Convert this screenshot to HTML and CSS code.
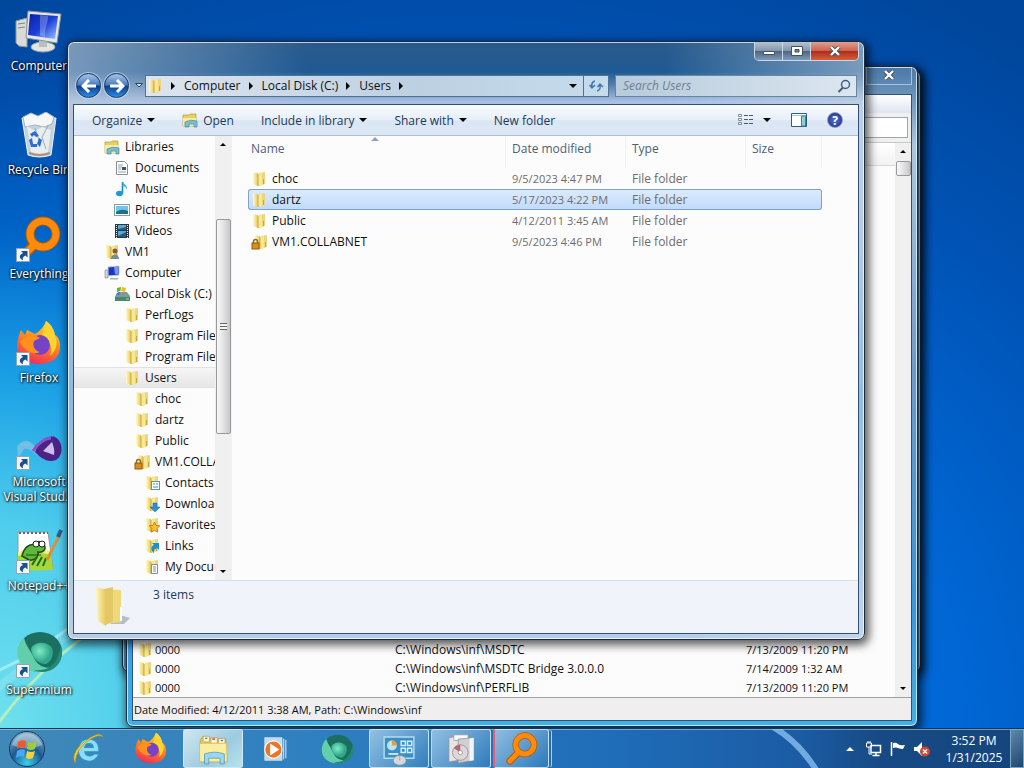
FILE: index.html
```html
<!DOCTYPE html>
<html lang="en">
<head>
  <meta charset="UTF-8">
  <title>Desktop</title>
  <link rel="stylesheet" href="styles.css">
</head>
<body>
  <!-- shared icons -->
  <svg class="defs" width="0" height="0" aria-hidden="true">
    <defs>
      <linearGradient id="gFolder" x1="0" x2="1"><stop offset="0" stop-color="#fffad0"/><stop offset="1" stop-color="#e6c858"/></linearGradient>
      <linearGradient id="gFox" x1="0.7" y1="0" x2="0.3" y2="1"><stop offset="0" stop-color="#ffe03a"/><stop offset="0.45" stop-color="#ff8a1c"/><stop offset="1" stop-color="#f02a5c"/></linearGradient>
      <linearGradient id="gScreen" x1="0" x2="1" y2="1"><stop offset="0" stop-color="#0a1ea8"/><stop offset="0.5" stop-color="#1c3fd8"/><stop offset="1" stop-color="#9cc4ff"/></linearGradient>
      <radialGradient id="gMarble" cx="0.4" cy="0.4"><stop offset="0" stop-color="#7eecc8"/><stop offset="1" stop-color="#2fa888"/></radialGradient>
      <radialGradient id="gOrb" cx="0.5" cy="0.9" r="0.9"><stop offset="0" stop-color="#3ad0f0"/><stop offset="0.5" stop-color="#1a5a92"/><stop offset="1" stop-color="#8fb4cc"/></radialGradient>
    </defs>
    <symbol id="folder" viewBox="0 0 16 16">
      <path d="M8 2l6-1v12l-6 2z" fill="#ecd67c"/>
      <path d="M2 1l5 1v13l-5-2z" fill="url(#gFolder)"/>
      <path d="M7 3l4-1v12l-4 1z" fill="#f8e894"/>
      <path d="M7 3v12M12.500 8v5" stroke="#c9a840" fill="none"/>
    </symbol>
    <symbol id="folder-lock" viewBox="0 0 16 16">
      <use href="#folder" x="2"/>
      <rect x="1" y="9" width="7" height="6" fill="#d98e1c" stroke="#8d5a10"/>
      <path d="M2.500 9V7.500a2 2 0 0 1 4 0V9" fill="none" stroke="#8d6a20" stroke-width="1.500"/>
    </symbol>
    <symbol id="folder-card" viewBox="0 0 16 16">
      <use href="#folder"/>
      <rect x="7.500" y="6.500" width="8" height="8" fill="#fff" stroke="#5b96b8"/>
      <path d="M9 9h2M12 9h2M9 12h5" stroke="#3a8fc8"/>
    </symbol>
    <symbol id="folder-down" viewBox="0 0 16 16">
      <use href="#folder"/>
      <path d="M9 7h4v4h3l-5 5-5-5h3z" fill="#2f8fd0" stroke="#1769a5" stroke-width="0.500"/>
    </symbol>
    <symbol id="folder-star" viewBox="0 0 16 16">
      <use href="#folder"/>
      <path d="M10.500 5l1.600 3.400 3.700.4-2.700 2.600.7 3.700-3.300-1.800-3.300 1.800.7-3.700L5.200 8.800l3.700-.4z" fill="#fbc02c" stroke="#d97a12"/>
    </symbol>
    <symbol id="folder-link" viewBox="0 0 16 16">
      <use href="#folder"/>
      <path d="M8 5h7v7l-2-2c-3 1-3 3-3 5-4-3-3-7 0-8z" fill="#1e8fd0"/>
    </symbol>
    <symbol id="folder-doc" viewBox="0 0 16 16">
      <use href="#folder"/>
      <path d="M7.500 5.500h6v9h-6z" fill="#fff" stroke="#7a8fb0"/>
      <path d="M9 8h3M9 10h3M9 12h3" stroke="#6f8fc0"/>
    </symbol>
    <symbol id="folder-user" viewBox="0 0 16 16">
      <use href="#folder"/>
      <circle cx="11" cy="7" r="2.500" fill="#8a5a38"/>
      <path d="M7 15c0-6 8-6 8 0z" fill="#6f8f88"/>
    </symbol>
    <symbol id="library" viewBox="0 0 16 16">
      <path d="M1 3h6l1-1h6v12H1z" fill="#e8cf68" stroke="#b89a38" stroke-width="0.700"/>
      <path d="M1 6h13v8H1z" fill="#f8eca0"/>
      <path d="M3 15v-5q5-3 12-1v6h-3v-3H7v3z" fill="#79bfd0" stroke="#4a8aa0" stroke-width="0.700"/>
    </symbol>
    <symbol id="doc" viewBox="0 0 16 16">
      <path d="M2.500 1.500h8l3 3v10h-11z" fill="#fff" stroke="#8a8f94"/>
      <path d="M4 5h5M4 7h4M4 9h3M4 12h8" stroke="#8aa0b0"/>
      <path d="M8 7h4v3H8z" fill="#3f5468"/>
    </symbol>
    <symbol id="music" viewBox="0 0 16 16">
      <path d="M8.500 1v11" stroke="#1a86c0" stroke-width="1.600"/>
      <path d="M8.500 0c1 4 6 4 4 9 0-3-2-4-4-4z" fill="#38b0e0"/>
      <ellipse cx="5.500" cy="12.500" rx="3.500" ry="2.700" fill="#1f98d4"/>
    </symbol>
    <symbol id="picture" viewBox="0 0 16 16">
      <rect x="0.500" y="2.500" width="15" height="11" fill="#fff" stroke="#8c9aa4"/>
      <path d="M2 4h12v8H2z" fill="#6fc8ec"/>
      <path d="M2 10q5-4 12-1v3H2z" fill="#1f6f88"/>
    </symbol>
    <symbol id="video" viewBox="0 0 16 16">
      <path d="M1 1h14v14H1z" fill="#2a3640"/>
      <path d="M4 2h8v5H4zM4 8h8v6H4z" fill="#5aa8d8"/>
      <path d="M4 6l8-2v3H4zM4 13l8-4v5H4z" fill="#28587c"/>
      <path d="M2.500 2v13M13.500 2v13" stroke="#e6eef2" stroke-dasharray="1 1"/>
    </symbol>
    <symbol id="pc" viewBox="0 0 16 16">
      <path d="M1 5h3v8H1z" fill="#cfd4da" stroke="#7c8590" stroke-width="0.600"/>
      <path d="M4 2l11-1v9L4 11z" fill="#1f35c0" stroke="#c2cad6"/>
      <path d="M10 2l4-.5V9l-3 .5z" fill="#6f9af0"/>
      <path d="M6 13h8v1.500H6z" fill="#a8b0ba"/>
    </symbol>
    <symbol id="disk" viewBox="0 0 16 16">
      <path d="M2 9l2-3h9l3 4v5H1v-5z" fill="#7f9a9a"/>
      <path d="M1 11h15v4H1z" fill="#4e8474"/>
      <path d="M12 13h3" stroke="#6cf07c"/>
      <path d="M3 2l4-1-.5 4L3 6z" fill="#6fb02c"/><path d="M8 1l4 1-1 4-4-1z" fill="#f2b81e"/>
      <path d="M3 7l3-1-.5 3H2z" fill="#3a80d8"/>
    </symbol>
    <symbol id="shortcut" viewBox="0 0 14 14">
      <path d="M.5.5h13v13H.5z" fill="#f4f8fb" stroke="#8fa6b8"/>
      <path d="M5 3h6.500v6.500L9.500 7.500C7 8.500 6.500 10 7 12 3 11 2.500 7 7 5z" fill="#1c4f8c"/>
    </symbol>
    <symbol id="everything" viewBox="0 0 48 48">
      <path d="M19 29L7 41" stroke="#b25a00" stroke-width="10" stroke-linecap="round"/>
      <circle cx="28" cy="18" r="13" fill="none" stroke="#b25a00" stroke-width="9"/>
      <path d="M19 29L7 41" stroke="#ff8a0c" stroke-width="7" stroke-linecap="round"/>
      <circle cx="28" cy="18" r="13" fill="none" stroke="#ff8a0c" stroke-width="7"/>
    </symbol>
    <symbol id="firefox" viewBox="0 0 48 48">
      <path d="M31 1c6 4 8 9 9 14 3 1 6 7 5 14-1 10-10 15-21 15S2 37 2 26c0-6 2-11 4-16l4 5 2-5c3 1 5 3 8 4 4-2 9-7 11-13z" fill="url(#gFox)"/>
      <path d="M31 1c6 5 8 9 9 15 4 8 0 16-5 20 4-10-2-16-8-20 1-5 3-9 4-15z" fill="#ffd42e"/>
      <circle cx="25" cy="25" r="10" fill="#7542c8"/>
      <path d="M5 22c6-7 15-8 20-4l-6 3c-2 5 1 10 6 11-6 3-14 1-20-10z" fill="#ff911c"/>
    </symbol>
    <symbol id="supermium" viewBox="0 0 48 48">
      <ellipse cx="25" cy="20" rx="22" ry="20" fill="#1c6f60"/>
      <path d="M9 6C-2 16 0 38 22 40c7 0 11-1 15-4-9 0-15-3-18-10S11 14 9 6z" fill="#62cfaa"/>
      <path d="M46 14c4 14-5 26-19 26-4 0-6-1-8-2 15 2 24-7 27-24z" fill="#218a72"/>
      <path d="M16 17c2-7 16-9 21-1 2 6 0 13-6 16-8 0-14-6-15-15z" fill="url(#gMarble)"/>
    </symbol>
    <symbol id="computer" viewBox="0 0 48 48">
      <path d="M1 13l11-3v29l-8-1-3-3z" fill="#d9dcd6" stroke="#949a98"/>
      <path d="M3 16l7-1M3 20l7-1" stroke="#7c8484"/>
      <ellipse cx="28" cy="39" rx="12" ry="5" fill="#e3e5e0" stroke="#9aa0a0"/>
      <path d="M24 31h8v8h-8z" fill="#b9bec0"/>
      <path d="M13 3l33 3-4 29-31-5z" fill="#e6e8e6" stroke="#8c9294"/>
      <path d="M15 6l28 2-3 23-27-4z" fill="url(#gScreen)"/>
      <path d="M25 7l8 1c0 9-4 12-3 21l-5-1z" fill="#fff" opacity=".25"/>
    </symbol>
    <symbol id="bin" viewBox="0 0 48 48">
      <path d="M7 6h34l-5 37q-12 4-23 0z" fill="#c4d2dc" stroke="#eef4f8"/>
      <path d="M8 5l8-4 7 3 8-4 8 5-2 7-8 3-9-2-10 2z" fill="#f4f6f7" stroke="#a9b4bc"/>
      <path d="M12 14l8 5 7-4 9 3-3 22-9 2-8-2z" fill="#e8edf0"/>
      <path d="M20 16l4 12M33 14l-6 11 4 12" stroke="#9babb6" fill="none"/>
      <path d="M15 22l5-3 4 5-3 1-2-2-2 2zM14 28l3-2 1 6h4v3h-6zM24 26l3 2-2 7-3-3z" fill="#2f6ad0"/>
      <path d="M14 41q11 4 21 0" stroke="#b98a78" stroke-width="2" fill="none"/>
    </symbol>
    <symbol id="vs" viewBox="0 0 48 48">
      <path d="M2 22c8-8 13-6 19 2l8 9c-9 0-13-10-20-8l-6 9z" fill="#7fc0e4" opacity=".85"/>
      <path d="M20 28C25 15 33 11 40 13c8 4 9 18 1 23-9 3-15-2-21-8z" fill="#4c2286"/>
      <path d="M28 27l9-9q3 7 2 13z" fill="#cdbcec"/>
      <path d="M18 27q8-12 18-13" stroke="#8b55c8" stroke-width="3" fill="none"/>
    </symbol>
    <symbol id="notepad" viewBox="0 0 48 48">
      <path d="M3 4h30l5 37-35 1z" fill="#fff" stroke="#8f9a9a"/>
      <path d="M3 28q16-8 33-4l2 18-35 1z" fill="#a5d838"/>
      <path d="M3 24q17-6 33-1v4q-16-5-33 1z" fill="#f4ee7a"/>
      <path d="M4 5h29" stroke="#666" stroke-width="2" stroke-dasharray="2 2"/>
      <path d="M7 28c2-9 8-13 14-11 1-5 7-4 8 0 3 4-1 8-6 7 1 5-4 9-9 8z" fill="#5eb83a" stroke="#184c18" stroke-width="1.500"/>
      <circle cx="21" cy="16" r="3" fill="#fff" stroke="#222"/><circle cx="27" cy="16" r="3" fill="#fff" stroke="#222"/>
      <path d="M11 27h15" stroke="#184c18"/>
      <path d="M17 37l5-8M22 38l5-9M28 38l3-8" stroke="#1d6c22" stroke-width="2"/>
      <path d="M32 32L45 6" stroke="#d7913c" stroke-width="3"/><path d="M43 9l3-7" stroke="#345a90" stroke-width="4"/>
    </symbol>
    <symbol id="ie" viewBox="0 0 48 48">
      <path d="M38 28H18c1 6 9 8 13 3h7c-3 8-10 11-16 10-9-1-14-8-13-17C10 14 17 9 25 10c10 1 14 9 13 18zM18 22h12c0-7-11-8-12 0z" fill="#8cdcf8" stroke="#2d92c8" stroke-width="1.500"/>
      <path d="M5 44C-2 35 8 20 20 12 30 4 42 0 43 7c-3-4-11-1-20 5C11 21 4 33 5 44z" fill="#f8d32c" stroke="#b99518"/>
    </symbol>
    <symbol id="explorer" viewBox="0 0 48 48">
      <path d="M6 12l3-5h9l2 3h22l2 32H6z" fill="#e8c95e" stroke="#b79638"/>
      <path d="M10 6h9v8h-9zM21 8h9v8h-9zM32 9h9v8h-9z" fill="#fff6d8" stroke="#b79a50"/>
      <path d="M13 8h3v2h-3z" fill="#3fa04c"/><path d="M23 9h4v2h-4z" fill="#c84040"/><path d="M35 11h3v2h-3z" fill="#4070c0"/>
      <path d="M5 16h38l1 26H5z" fill="#f9eda0" stroke="#d3b95a"/>
      <path d="M12 45V31q14-5 28 0v14h-6v-8H18v8z" fill="#9cd6ee" stroke="#4790b8"/>
    </symbol>
    <symbol id="wmp" viewBox="0 0 48 48">
      <path d="M5 3h32v42H5z" fill="#c3d9e6" stroke="#e9f4fa"/>
      <path d="M40 5v38M44 7v34" stroke="#d0e2ee" stroke-width="2"/>
      <circle cx="21" cy="25" r="16" fill="#ed7424" stroke="#fff" stroke-width="2"/>
      <path d="M15 14l17 11-17 11z" fill="#fff"/>
    </symbol>
    <symbol id="cpanel" viewBox="0 0 48 48">
      <path d="M3 7h42v30H3z" fill="#3a8fc4" stroke="#b7dcf0" stroke-width="2"/>
      <circle cx="14" cy="19" r="7" fill="#b8e4f6"/><path d="M14 19v-7a7 7 0 0 1 7 7z" fill="#f29c2c"/>
      <path d="M27 13h6v6h-6zM36 13h6v6h-6zM27 23h6v6h-6zM36 23h6v6h-6z" fill="none" stroke="#d5effa" stroke-width="2"/>
      <path d="M9 31h14" stroke="#fff" stroke-width="2"/>
      <ellipse cx="25" cy="40" rx="9" ry="7" fill="#d4d8da" stroke="#838d94"/><path d="M25 34v6" stroke="#8d969c"/>
    </symbol>
    <symbol id="installer" viewBox="0 0 48 48">
      <path d="M7 8l20-3v34L7 42z" fill="#e8e4e4" stroke="#9a9494"/>
      <path d="M14 4h20v8H14z" fill="#fafafa" stroke="#999"/>
      <path d="M20 10l22-2v32l-22 4z" fill="#cfcfd4" stroke="#8c8c92"/>
      <path d="M36 9l6-1v32l-6 1z" fill="#f4f4f4"/>
      <circle cx="23" cy="29" r="11" fill="#ded6da" stroke="#8e8488"/><path d="M23 29l-9-6a11 11 0 0 1 9-5z" fill="#b06878"/>
      <circle cx="23" cy="29" r="3" fill="#fff" stroke="#888"/>
    </symbol>
    <symbol id="x" viewBox="0 0 12 10">
      <path d="M2 1l8 8M10 1L2 9" stroke="#45505c" stroke-width="4"/>
      <path d="M2 1l8 8M10 1L2 9" stroke="#fff" stroke-width="2.400"/>
    </symbol>
    <symbol id="up" viewBox="0 0 8 4"><path d="M0 4l4-4 4 4z"/></symbol>
    <symbol id="down" viewBox="0 0 8 4"><path d="M0 0h8L4 4z"/></symbol>
    <symbol id="right" viewBox="0 0 4 8"><path d="M0 0l4 4-4 4z"/></symbol>
  </svg>

  <main class="desktop">
    <svg class="wallpaper" viewBox="0 0 1024 728" preserveAspectRatio="none" aria-hidden="true">
      <path d="M-5 672Q70 640 140 560" stroke="#e8ffff" stroke-width="3" opacity=".45" fill="none"/>
      <path d="M-5 728Q50 650 140 600" stroke="#d8f8a0" stroke-width="3" opacity=".65" fill="none"/>
      <path d="M-5 690Q70 630 140 590" stroke="#fff" stroke-width="8" opacity=".15" fill="none"/>
    </svg>

    <nav class="shortcuts">
      <a href="#"><svg class="pic"><use href="#computer"/></svg><span>Computer</span></a>
      <a href="#"><svg class="pic"><use href="#bin"/></svg><span>Recycle Bin</span></a>
      <a href="#"><svg class="pic"><use href="#everything"/></svg><svg class="arrow"><use href="#shortcut"/></svg><span>Everything</span></a>
      <a href="#"><svg class="pic"><use href="#firefox"/></svg><svg class="arrow"><use href="#shortcut"/></svg><span>Firefox</span></a>
      <a href="#"><svg class="pic"><use href="#vs"/></svg><svg class="arrow"><use href="#shortcut"/></svg><span>Microsoft<br>Visual Stud...</span></a>
      <a href="#"><svg class="pic"><use href="#notepad"/></svg><svg class="arrow"><use href="#shortcut"/></svg><span>Notepad++</span></a>
      <a href="#"><svg class="pic"><use href="#supermium"/></svg><svg class="arrow"><use href="#shortcut"/></svg><span>Supermium</span></a>
    </nav>

    <div class="window back-window"></div>

    <section class="window search-window">
      <div class="search-title">
        <button class="flat-close" aria-label="Close"><svg width="12" height="10"><use href="#x"/></svg></button>
      </div>
      <div class="client">
        <div class="menu-strip"></div>
        <div class="search-strip"><input type="text" aria-label="Search"></div>
        <div class="results">
          <div class="result-list">
            <div class="result-head"></div>
            <table>
              <tr><td><svg class="ico"><use href="#folder"/></svg>0000</td><td class="path">C:\Windows\inf\MSDTC</td><td>7/13/2009 11:20 PM</td></tr>
              <tr><td><svg class="ico"><use href="#folder"/></svg>0000</td><td class="path">C:\Windows\inf\MSDTC Bridge 3.0.0.0</td><td>7/14/2009 1:32 AM</td></tr>
              <tr><td><svg class="ico"><use href="#folder"/></svg>0000</td><td class="path">C:\Windows\inf\PERFLIB</td><td>7/13/2009 11:20 PM</td></tr>
            </table>
          </div>
          <div class="scrollbar">
            <svg width="6" height="3" viewBox="0 0 8 4"><use href="#up"/></svg>
            <div class="thumb small"></div>
            <svg class="end" width="6" height="3" viewBox="0 0 8 4"><use href="#down"/></svg>
          </div>
        </div>
        <div class="status">Date Modified: 4/12/2011 3:38 AM, Path: C:\Windows\inf</div>
      </div>
    </section>

    <section class="window explorer">
      <div class="titlebar">
        <div class="caption">
          <button class="min" aria-label="Minimize"><svg width="14" height="12"><path d="M1.500 6.500h11v3h-11z" fill="#fff" stroke="#45505c"/></svg></button>
          <button class="max" aria-label="Maximize"><svg width="14" height="12"><path d="M1.500 1.500h11v9h-11z" fill="#fff" stroke="#45505c"/><path d="M5 4.500h4v2.500H5z" fill="#6f86a0" stroke="#45505c"/></svg></button>
          <button class="close" aria-label="Close"><svg width="12" height="10"><use href="#x"/></svg></button>
        </div>
      </div>
      <div class="navbar">
        <button class="round" aria-label="Back"><svg width="16" height="14"><path d="M8 1L2 7l6 6M2 7h13" fill="none" stroke="#fff" stroke-width="3"/></svg></button>
        <button class="round" aria-label="Forward"><svg width="16" height="14"><path d="M8 1l6 6-6 6M14 7H1" fill="none" stroke="#fff" stroke-width="3"/></svg></button>
        <button class="recent" aria-label="Recent pages"><svg width="8" height="5"><path d="M.5.500h7L4 4z" fill="#cfe4f4" stroke="#24486c"/></svg></button>
        <div class="address">
          <svg class="ico"><use href="#folder"/></svg>
          <svg class="sep" width="4" height="8"><use href="#right"/></svg>
          <a href="#">Computer</a><svg class="sep" width="4" height="8"><use href="#right"/></svg>
          <a href="#">Local Disk (C:)</a><svg class="sep" width="4" height="8"><use href="#right"/></svg>
          <a href="#">Users</a><svg class="sep" width="4" height="8"><use href="#right"/></svg>
          <button class="drop" aria-label="Previous locations"><svg width="8" height="4"><use href="#down"/></svg></button>
          <button class="refresh" aria-label="Refresh"><svg width="16" height="14"><path d="M7 2Q3 3 4 8M1.500 6L4 9l3-3M9 12q4-1 3-6M9.500 8L12 5l3 3" fill="none" stroke="#3f78b0" stroke-width="1.500"/></svg></button>
        </div>
        <div class="searchbox">
          <input type="text" placeholder="Search Users" aria-label="Search Users">
          <svg width="14" height="14"><circle cx="8.500" cy="5.500" r="4" fill="none" stroke="#3f5f80" stroke-width="1.500"/><path d="M6 8.500L1.500 13" stroke="#3f5f80" stroke-width="2"/></svg>
        </div>
      </div>
      <div class="client">
        <div class="toolbar">
          <button>Organize <svg width="8" height="4"><use href="#down"/></svg></button>
          <button class="open"><svg class="ico"><use href="#library"/></svg> Open</button>
          <button>Include in library <svg width="8" height="4"><use href="#down"/></svg></button>
          <button>Share with <svg width="8" height="4"><use href="#down"/></svg></button>
          <button>New folder</button>
          <div class="toolbar-right">
            <button class="views" aria-label="Change your view">
              <svg width="16" height="14"><path d="M1.500 1.500h3v2h-3zM1.500 5.500h3v2h-3zM1.500 9.500h3v2h-3z" fill="#fff" stroke="#7c8c9c"/><path d="M7 2.500h9M7 6.500h9M7 10.500h9" stroke="#4a5a6c" stroke-dasharray="4 1"/></svg>
              <svg width="8" height="4"><use href="#down"/></svg>
            </button>
            <button aria-label="Preview pane"><svg width="16" height="14"><path d="M.5.500h15v13H.5z" fill="#fff" stroke="#2f5a80"/><path d="M1 2.500h14" stroke="#a8c4dc"/><path d="M10.500 3h4v10h-4z" fill="#8fd0d8" stroke="#3f7f98"/></svg></button>
            <button class="help" aria-label="Help">?</button>
          </div>
        </div>
        <div class="body">
          <nav class="tree">
            <ul>
              <li class="l0"><a href="#"><svg class="ico"><use href="#library"/></svg>Libraries</a></li>
              <li class="l1"><a href="#"><svg class="ico"><use href="#doc"/></svg>Documents</a></li>
              <li class="l1"><a href="#"><svg class="ico"><use href="#music"/></svg>Music</a></li>
              <li class="l1"><a href="#"><svg class="ico"><use href="#picture"/></svg>Pictures</a></li>
              <li class="l1"><a href="#"><svg class="ico"><use href="#video"/></svg>Videos</a></li>
              <li class="l0"><a href="#"><svg class="ico"><use href="#folder-user"/></svg>VM1</a></li>
              <li class="l0"><a href="#"><svg class="ico"><use href="#pc"/></svg>Computer</a></li>
              <li class="l1"><a href="#"><svg class="ico"><use href="#disk"/></svg>Local Disk (C:)</a></li>
              <li class="l2"><a href="#"><svg class="ico"><use href="#folder"/></svg>PerfLogs</a></li>
              <li class="l2"><a href="#"><svg class="ico"><use href="#folder"/></svg>Program Files</a></li>
              <li class="l2"><a href="#"><svg class="ico"><use href="#folder"/></svg>Program Files</a></li>
              <li class="l2 current"><a href="#"><svg class="ico"><use href="#folder"/></svg>Users</a></li>
              <li class="l3"><a href="#"><svg class="ico"><use href="#folder"/></svg>choc</a></li>
              <li class="l3"><a href="#"><svg class="ico"><use href="#folder"/></svg>dartz</a></li>
              <li class="l3"><a href="#"><svg class="ico"><use href="#folder"/></svg>Public</a></li>
              <li class="l3"><a href="#"><svg class="ico"><use href="#folder-lock"/></svg>VM1.COLLABNET</a></li>
              <li class="l4"><a href="#"><svg class="ico"><use href="#folder-card"/></svg>Contacts</a></li>
              <li class="l4"><a href="#"><svg class="ico"><use href="#folder-down"/></svg>Downloads</a></li>
              <li class="l4"><a href="#"><svg class="ico"><use href="#folder-star"/></svg>Favorites</a></li>
              <li class="l4"><a href="#"><svg class="ico"><use href="#folder-link"/></svg>Links</a></li>
              <li class="l4"><a href="#"><svg class="ico"><use href="#folder-doc"/></svg>My Documents</a></li>
            </ul>
          </nav>
          <div class="scrollbar">
            <svg width="6" height="3" viewBox="0 0 8 4"><use href="#up"/></svg>
            <div class="thumb tall"></div>
            <svg class="end" width="6" height="3" viewBox="0 0 8 4"><use href="#down"/></svg>
          </div>
          <div class="files">
            <table>
              <thead>
                <tr><th class="name">Name<svg class="sorted" width="8" height="4"><use href="#up"/></svg></th><th class="date">Date modified</th><th class="type">Type</th><th class="size">Size</th></tr>
              </thead>
              <tbody>
                <tr><td><svg class="ico"><use href="#folder"/></svg>choc</td><td class="when">9/5/2023 4:47 PM</td><td>File folder</td><td></td></tr>
                <tr class="selected"><td><svg class="ico"><use href="#folder"/></svg>dartz</td><td class="when">5/17/2023 4:22 PM</td><td>File folder</td><td></td></tr>
                <tr><td><svg class="ico"><use href="#folder"/></svg>Public</td><td class="when">4/12/2011 3:45 AM</td><td>File folder</td><td></td></tr>
                <tr><td><svg class="ico"><use href="#folder-lock"/></svg>VM1.COLLABNET</td><td class="when">9/5/2023 4:46 PM</td><td>File folder</td><td></td></tr>
              </tbody>
            </table>
          </div>
        </div>
        <div class="details">
          <svg width="44" height="46" viewBox="0 0 44 46"><path d="M30 32l10 3-6 6H20z" fill="#8f98a0" opacity=".6"/><path d="M14 6l17 1v32l-17 2z" fill="#f0d878"/><path d="M14 6l9-2v34l-7 4z" fill="#e4c868"/><path d="M5 3l11 4v36L8 38z" fill="url(#gFolder)"/><path d="M31 24v14" stroke="#fff" stroke-width="2"/></svg>
          <span>3 items</span>
        </div>
      </div>
    </section>
  </main>

  <footer class="taskbar">
    <svg class="streak" viewBox="0 0 80 40" preserveAspectRatio="none" aria-hidden="true"><path d="M-2 -6Q30 10 50 44" stroke="#8fc6f4" stroke-width="6" opacity=".75" fill="none"/></svg>
    <button class="start" aria-label="Start">
      <svg width="38" height="38" viewBox="0 0 38 38"><circle cx="19" cy="19" r="17.500" fill="url(#gOrb)" stroke="#15385a"/><path d="M4 15a15.500 15.500 0 0 1 30 0q-15 7-30 0z" fill="#fff" opacity=".35"/><path d="M10 12q4-3 8-1l-1 7q-4-2-8 1z" fill="#f0582c"/><path d="M20 12q4 2 9-1l-2 8q-4 2-8 0z" fill="#9ccc3c"/><path d="M9 21q4-3 8-1l-1 7q-4-2-8 1z" fill="#4aa8f0"/><path d="M19 21q4 2 8 0l-2 7q-4 2-7 0z" fill="#fcd033"/></svg>
    </button>
    <nav class="tasks">
      <button aria-label="Internet Explorer"><svg class="tico"><use href="#ie"/></svg></button>
      <button aria-label="Firefox"><svg class="tico"><use href="#firefox"/></svg></button>
      <button class="open active" aria-label="Windows Explorer"><svg class="tico"><use href="#explorer"/></svg></button>
      <button aria-label="Media Player"><svg class="tico media"><use href="#wmp"/></svg></button>
      <button aria-label="Supermium"><svg class="tico" viewBox="0 -4 48 48"><use href="#supermium" width="48" height="48"/></svg></button>
      <button class="open" aria-label="Control Panel"><svg class="tico"><use href="#cpanel"/></svg></button>
      <button class="open" aria-label="Programs and Features"><svg class="tico"><use href="#installer"/></svg></button>
      <button class="open stacked" aria-label="Everything"><svg class="tico"><use href="#everything"/></svg></button>
    </nav>
    <div class="tray">
      <svg class="more" width="8" height="4"><use href="#up"/></svg>
      <svg width="16" height="16"><path d="M5 4.500h9.500v7H5zM10 12v2M6.500 14.500h7" fill="none" stroke="#fff" stroke-width="1.500"/><path d="M.5 2h5v4h-5zM3 6v7h3" fill="none" stroke="#fff"/><path d="M2 0v2M4 0v2" stroke="#fff"/></svg>
      <svg width="16" height="16"><path d="M1.500 1v14" stroke="#fff" stroke-width="1.500"/><path d="M3 2q3-1 5 1t7 1l-2 4q-3 0-5-1t-5 0z" fill="#fff"/></svg>
      <svg width="16" height="16"><path d="M0 6h3l5-5v14l-5-5H0z" fill="#fff"/><circle cx="11" cy="10.500" r="5" fill="#d8432c"/><path d="M9 8.500l4 4M13 8.500l-4 4" stroke="#fff" stroke-width="1.500"/></svg>
      <div class="clock">3:52 PM<br>1/31/2025</div>
      <button class="peek" aria-label="Show desktop"></button>
    </div>
  </footer>
</body>
</html>
```

FILE: styles.css
```css
* {
  box-sizing: border-box;
}
body {
  margin: 0;
  height: 100vh;
  display: flex;
  flex-direction: column;
  overflow: hidden;
  font-family: "Open Sans", "Noto Sans", sans-serif;
  font-size: 12px;
  line-height: 15px;
  color: #111;
}
button {
  font: inherit;
  color: inherit;
  background: none;
  border: 0;
  padding: 0;
}
a {
  color: inherit;
  text-decoration: none;
}
svg {
  flex: none;
}
.defs {
  position: absolute;
}
.ico {
  width: 16px;
  height: 16px;
}

/* desktop */
.desktop {
  position: relative;
  flex: 1;
  min-height: 0;
  overflow: hidden;
  background:
    radial-gradient(ellipse 44% 88% at 0% 100%, #6fe0ee 0%, #4fcdec 32%, rgba(30, 170, 234, 0.85) 55%, rgba(0, 120, 220, 0.4) 78%, rgba(0, 100, 205, 0) 100%),
    radial-gradient(ellipse 95% 115% at 45% 100%, #0c84ea 0%, #0068d6 50%, #0052b4 78%, #00469c 100%);
}
.wallpaper {
  position: absolute;
  inset: 0;
  width: 100%;
  height: 100%;
}
.shortcuts {
  position: relative;
  display: grid;
  grid-auto-rows: 104px;
  width: 78px;
  padding-top: 8px;
}
.shortcuts a {
  position: relative;
  display: flex;
  flex-direction: column;
  align-items: center;
  gap: 2px;
  text-align: center;
  white-space: nowrap;
  color: #fff;
  text-shadow: 1px 1px 2px #000, 0 0 3px #000;
}
.pic {
  width: 48px;
  height: 48px;
}
.arrow {
  position: absolute;
  left: 16px;
  top: 32px;
  width: 14px;
  height: 14px;
}

/* windows */
.window {
  position: absolute;
  border: 1px solid #1b2a3c;
  border-radius: 7px;
  box-shadow: inset 0 0 0 1px rgba(255, 255, 255, 0.7), 2px 3px 10px 2px rgba(0, 0, 0, 0.65);
}
.back-window {
  top: 70px;
  right: 103px;
  bottom: 56px;
  left: 122px;
  background: #4a94cc;
}
.search-window {
  top: 66px;
  right: 106px;
  bottom: 1px;
  left: 126px;
  padding: 0 5px 5px;
  display: flex;
  flex-direction: column;
  background: linear-gradient(#4a78a8 0, #6f98bc 5%, #a9c8e0 12%, #6f9cc8 45%, #3a94dc 80%, #3fb0e8);
}
.search-title {
  height: 27px;
  display: flex;
  justify-content: flex-end;
  align-items: flex-start;
}
.flat-close {
  width: 46px;
  height: 18px;
  border: 1px solid rgba(220, 236, 250, 0.6);
  border-top: 0;
}
.client {
  flex: 1;
  min-height: 0;
  display: flex;
  flex-direction: column;
  border: 1px solid #2f5276;
  background: #fcfcfc;
}
.menu-strip {
  height: 18px;
  background: linear-gradient(#fff, #dfe4f0);
}
.search-strip {
  padding: 4px 3px;
  background: #f0f0f0;
  border-bottom: 1px solid #c8c8c8;
}
.search-strip input {
  display: block;
  width: 100%;
  height: 21px;
  border: 1px solid #9aa6b4;
  background: #fff;
}
.results {
  flex: 1;
  min-height: 0;
  display: flex;
}
.result-list {
  flex: 1;
  display: flex;
  flex-direction: column;
  justify-content: space-between;
}
.result-head {
  height: 23px;
  background: linear-gradient(#fff, #f2f2f2);
  border-bottom: 1px solid #d8d8d8;
}
.result-list table {
  width: 100%;
  table-layout: fixed;
  border-spacing: 0;
}
.result-list td {
  height: 19px;
  padding: 0 0 0 4px;
  font-size: 11px;
  white-space: nowrap;
}
.result-list .path {
  font-size: 12px;
}
.result-list td:nth-child(1) {
  width: 258px;
}
.result-list td:nth-child(3) {
  width: 153px;
}
.result-list .ico {
  vertical-align: -4px;
  margin-right: 2px;
}
.status {
  height: 23px;
  padding: 4px 1px;
  border-top: 1px solid #a0a0a0;
  background: #f0eeee;
  font-size: 11px;
}
.scrollbar {
  width: 16px;
  display: flex;
  flex-direction: column;
  align-items: center;
  padding: 7px 0;
  background: #f0f0f0;
}
.scrollbar .end {
  margin-top: auto;
}
.thumb {
  border: 1px solid #989898;
  border-radius: 2px;
  background: linear-gradient(90deg, #f8f8f8, #e2e2e4 50%, #c6c6ca);
}
.thumb.small {
  width: 15px;
  height: 15px;
  margin-top: 8px;
}
.thumb.tall {
  width: 15px;
  height: 50%;
  margin-top: 73px;
  display: grid;
  place-items: center;
}
.thumb.tall::after {
  content: "";
  width: 7px;
  height: 7px;
  background: repeating-linear-gradient(#666 0 1px, #f4f4f4 1px 3px);
}

/* explorer */
.explorer {
  top: 41px;
  right: 159px;
  bottom: 88px;
  left: 67px;
  padding: 0 5px 5px;
  display: flex;
  flex-direction: column;
  background:
    linear-gradient(90deg, rgba(190, 205, 222, 0.55), rgba(190, 205, 222, 0) 30%, rgba(190, 205, 222, 0) 75%, rgba(210, 220, 232, 0.5)),
    linear-gradient(#2a5a8a 0, #1f5a94 5%, #4f7cac 7%, #a9c0e4 10%, #a4bce0 30%, #5a9ed4 60%, #b4ccf0 100%);
}
.titlebar {
  height: 29px;
  display: flex;
  justify-content: flex-end;
}
.caption {
  display: flex;
  height: 19px;
  border: 1px solid #c9d8e6;
  border-top: 0;
  border-radius: 0 0 5px 5px;
  overflow: hidden;
}
.caption button {
  width: 28px;
  display: grid;
  place-items: center;
  border-right: 1px solid #c9d8e6;
  background: linear-gradient(#b6c4d2, #8397ac 48%, #4c6684 52%, #7f9ab6);
}
.caption .close {
  width: 47px;
  border-right: 0;
  background: linear-gradient(#e0a090, #cc6450 48%, #b02c18 52%, #d4603c);
}
.navbar {
  height: 33px;
  padding: 0 2px 4px 3px;
  display: flex;
  align-items: center;
}
.round {
  width: 25px;
  height: 25px;
  margin-right: 3px;
  display: grid;
  place-items: center;
  border: 1px solid #1c3c68;
  border-radius: 50%;
  background: linear-gradient(#a8c4e4, #4a7cc0 48%, #0c3c90 52%, #2f8ce0);
  box-shadow: 0 0 0 1px rgba(210, 228, 245, 0.6);
}
.recent {
  width: 13px;
  display: grid;
  place-items: center;
}
.address {
  flex: 1;
  height: 22px;
  display: flex;
  align-items: center;
  border: 1px solid #4e7294;
  background: linear-gradient(90deg, #dde4ee, #bcd0e2 60%, #c6dcec);
  padding-left: 1px;
}
.address .ico {
  margin-right: 8px;
}
.address a {
  padding: 0 8px 0 9px;
}
.address .drop {
  width: 20px;
  height: 100%;
  margin-left: auto;
  display: grid;
  place-items: center;
}
.address .refresh {
  width: 25px;
  height: 100%;
  border-left: 1px solid #4e7294;
  display: grid;
  place-items: center;
}
.searchbox {
  width: 242px;
  height: 22px;
  margin-left: 6px;
  display: flex;
  align-items: center;
  padding: 0 5px 0 7px;
  border: 1px solid #6686a4;
  background: linear-gradient(90deg, #b6cbdc, #dce6f0);
}
.searchbox input {
  flex: 1;
  min-width: 0;
  padding: 0;
  border: 0;
  background: none;
  font: italic 12px/15px "Open Sans", "Noto Sans", sans-serif;
}
.searchbox input::placeholder {
  color: #71808e;
}
.toolbar {
  height: 31px;
  padding: 0 15px 0 18px;
  display: flex;
  align-items: center;
  gap: 27px;
  color: #1e3956;
  background: linear-gradient(#fafcff, #e6eef9 50%, #dbe6f4 52%, #dce8f6);
  border-bottom: 1px solid #aebfd2;
}
.toolbar button {
  display: flex;
  align-items: center;
  gap: 5px;
  white-space: nowrap;
}
.toolbar-right {
  margin-left: auto;
  display: flex;
  align-items: center;
  gap: 20px;
}
.toolbar .views {
  gap: 10px;
}
.toolbar .help {
  width: 16px;
  height: 16px;
  justify-content: center;
  border: 1px solid #8f98c0;
  border-radius: 50%;
  background: radial-gradient(#5878d8, #14247c);
  color: #fff;
  font-weight: bold;
}
.body {
  flex: 1;
  min-height: 0;
  display: flex;
}
.tree {
  width: 141px;
  overflow: hidden;
}
.tree ul {
  margin: 0;
  padding: 0;
  list-style: none;
}
.tree li {
  height: 21px;
  padding-left: 30px;
}
.tree a {
  height: 21px;
  display: flex;
  align-items: center;
  gap: 5px;
  white-space: nowrap;
}
.tree .l1 {
  padding-left: 40px;
}
.tree .l2 {
  padding-left: 50px;
}
.tree .l3 {
  padding-left: 60px;
}
.tree .l4 {
  padding-left: 70px;
}
.tree .current {
  background: linear-gradient(#f6f6f6, #e6e6e6);
  border: 1px solid #e2e2e2;
  border-width: 1px 0;
}
.tree .current a {
  height: 19px;
}
.files {
  flex: 1;
  padding-left: 16px;
  border-left: 1px solid #eef2f8;
  background: #fcfcfc;
}
.files table {
  table-layout: fixed;
  border-spacing: 0;
  width: 574px;
}
.files th {
  position: relative;
  height: 32px;
  padding: 0 0 7px 6px;
  text-align: left;
  font-weight: normal;
  color: #4c607a;
  border-right: 1px solid #eef1f5;
}
.files th.name {
  width: 258px;
  padding-left: 3px;
}
.files th.date,
.files th.type {
  width: 120px;
}
.sorted {
  position: absolute;
  left: 123px;
  top: 1px;
  fill: #8aa4bc;
}
.files td {
  height: 21px;
  padding: 0 0 0 6px;
  border: 1px solid transparent;
  border-width: 1px 0;
  color: #6d6d6d;
  white-space: nowrap;
}
.files td:first-child {
  padding-left: 2px;
  border-left-width: 1px;
  color: #111;
}
.files td:last-child {
  border-right-width: 1px;
}
.files td.when {
  font-size: 11px;
}
.files td .ico {
  vertical-align: -4px;
  margin-right: 5px;
}
.selected td {
  border-color: #7da2ce;
  background: linear-gradient(#dcebfc, #c1dbfc);
}
.files .selected td {
  border-color: #7da2ce;
}
.selected td:first-child {
  border-radius: 3px 0 0 3px;
}
.selected td:last-child {
  border-radius: 0 3px 3px 0;
}
.details {
  height: 53px;
  display: flex;
  gap: 19px;
  padding: 2px 16px;
  border-top: 1px solid #d4dfec;
  background: #f0f4fa;
  color: #1e395b;
  font-size: 12px;
}
.details span {
  padding-top: 4px;
}

/* taskbar */
.taskbar {
  position: relative;
  height: 40px;
  display: flex;
  align-items: stretch;
  border-top: 1px solid #12385c;
  box-shadow: inset 0 1px 0 rgba(200, 228, 250, 0.5);
  background: linear-gradient(90deg, #4088b8, #2f80c0 30%, #1f6cb8 60%, #1b5ca4 78%, #174a84 86%, #14457c);
}
.streak {
  position: absolute;
  left: 75%;
  top: 0;
  width: 80px;
  height: 40px;
}
.start {
  width: 54px;
  margin-right: 5px;
  display: grid;
  place-items: center;
}
.tasks {
  display: flex;
  gap: 2px;
}
.tasks button {
  width: 60px;
  display: grid;
  place-items: center;
  border-radius: 3px;
}
.tasks .open {
  border: 1px solid rgba(215, 238, 252, 0.8);
  background: linear-gradient(135deg, rgba(190, 222, 242, 0.7), rgba(70, 140, 190, 0.3));
}
.tasks .active {
  background: linear-gradient(135deg, #d0e6f0, #9ccbe0 60%, #b8e4ee);
}
.tasks .stacked {
  width: 56px;
  border-left: 2px solid #f05a6c;
  box-shadow: 3px 0 0 -1px #2a6ca8, 4px 0 0 -1px #a8d0ec;
}
.tico {
  width: 34px;
  height: 34px;
}
.tico.media {
  width: 26px;
  height: 26px;
}
.tray {
  position: relative;
  margin-left: auto;
  display: flex;
  align-items: center;
  gap: 8px;
  color: #fff;
}
.tray .more {
  margin-right: 4px;
  fill: #fff;
}
.clock {
  width: 72px;
  line-height: 17px;
  text-align: center;
}
.peek {
  align-self: stretch;
  width: 14px;
  margin-left: -8px;
  border: 1px solid #7da4c4;
  background: linear-gradient(135deg, #5f88ac, #1c466e);
}
```
